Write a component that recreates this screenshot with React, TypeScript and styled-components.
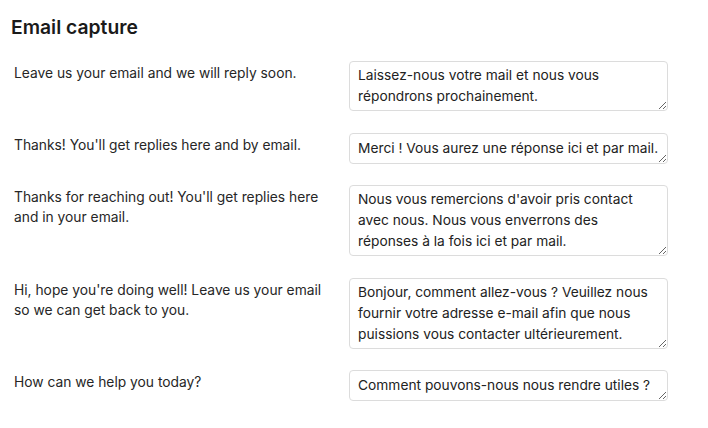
import React from "react";
import styled, { createGlobalStyle } from "styled-components";

const Global = createGlobalStyle`
  html, body { margin: 0; padding: 0; background: #fff; }
  body { font-family: Inter, "Noto Sans", sans-serif; color: #1f1f1f; }
`;

const Page = styled.div`
  padding: 14px 0 0 11px;
  width: 708px;
  box-sizing: border-box;
`;

const Title = styled.h1`
  margin: 0 0 21px 0;
  font-size: 19.3px;
  line-height: 26px;
  font-weight: 600;
  color: #1a1a1a;
`;

const List = styled.div`
  display: flex;
  flex-direction: column;
  gap: 21.5px;
  padding-left: 3px;
`;

const Row = styled.div`
  display: grid;
  grid-template-columns: 335px 319px;
  align-items: start;
`;

const Label = styled.div`
  font-size: 13.8px;
  line-height: 20px;
  color: #262626;
  padding-top: 2px;
  padding-right: 10px;
`;

const Field = styled.textarea<{ $rows: number }>`
  box-sizing: border-box;
  width: 319px;
  height: ${(p) => Math.max(31, p.$rows * 21 + 8)}px;
  margin: 0;
  padding: ${(p) => (p.$rows === 1 ? "4px 5px 4px 8px" : "3px 5px 3px 8px")};
  border: 1px solid #dcdcdc;
  border-radius: 4px;
  font-family: Inter, "Noto Sans", sans-serif;
  font-size: 13.75px;
  line-height: 21px;
  color: #222;
  resize: vertical;
  overflow: hidden;
  display: block;
  background: #fff;
`;

const items = [
  { en: "Leave us your email and we will reply soon.", fr: "Laissez-nous votre mail et nous vous répondrons prochainement.", rows: 2 },
  { en: "Thanks! You'll get replies here and by email.", fr: "Merci ! Vous aurez une réponse ici et par mail.", rows: 1 },
  { en: "Thanks for reaching out! You'll get replies here and in your email.", fr: "Nous vous remercions d'avoir pris contact avec nous. Nous vous enverrons des réponses à la fois ici et par mail.", rows: 3 },
  { en: "Hi, hope you're doing well! Leave us your email so we can get back to you.", fr: "Bonjour, comment allez-vous ? Veuillez nous fournir votre adresse e-mail afin que nous puissions vous contacter ultérieurement.", rows: 3 },
  { en: "How can we help you today?", fr: "Comment pouvons-nous nous rendre utiles ?", rows: 1 },
];

export default function App() {
  return (
    <Page>
      <Global />
      <Title>Email capture</Title>
      <List>
        {items.map((it, i) => (
          <Row key={i}>
            <Label>{it.en}</Label>
            <Field $rows={it.rows} defaultValue={it.fr} />
          </Row>
        ))}
      </List>
    </Page>
  );
}
